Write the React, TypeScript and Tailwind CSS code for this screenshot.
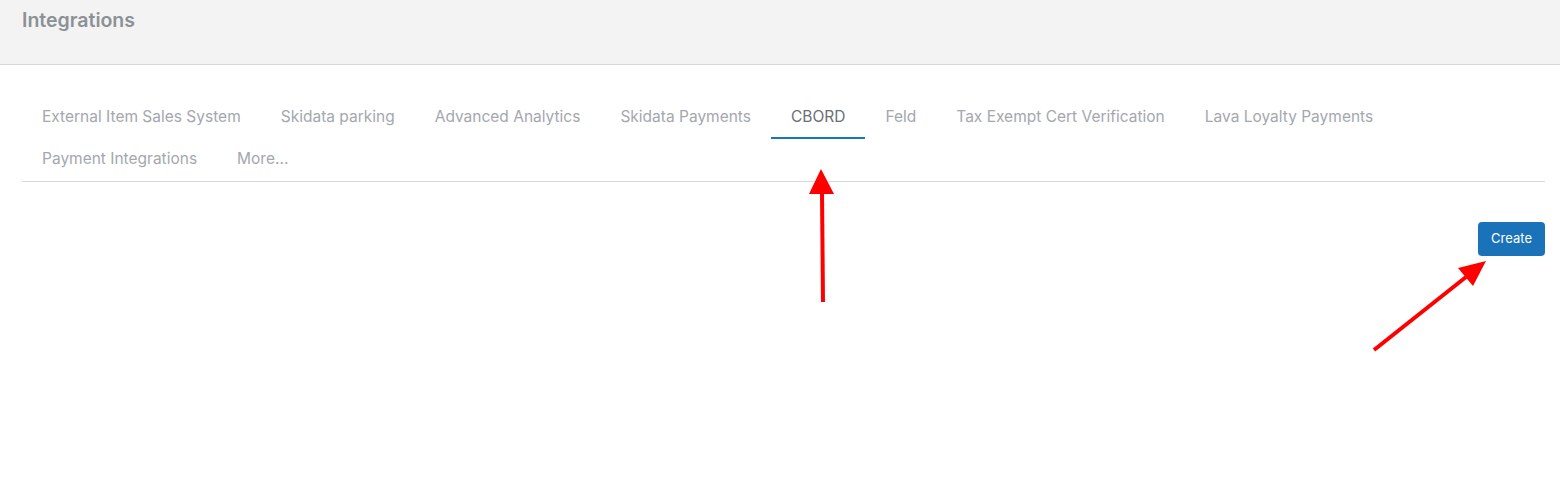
import React from 'react';

const tabs = [
  'External Item Sales System',
  'Skidata parking',
  'Advanced Analytics',
  'Skidata Payments',
  'CBORD',
  'Feld',
  'Tax Exempt Cert Verification',
  'Lava Loyalty Payments',
  'Payment Integrations',
  'More...',
];

const ACTIVE = 'CBORD';

export default function App() {
  return (
    <div className="relative min-h-[479px] bg-white" style={{ fontFamily: 'Inter, "Noto Sans", sans-serif' }}>
      <div className="h-[65px] bg-[#f3f3f3] border-b border-[#d9d9d9] px-[22px] pt-[7px]">
        <h1 className="text-[19.5px] font-semibold text-[#8c9196] leading-[26px]">Integrations</h1>
      </div>

      <div className="ml-[22px] mr-[15px] mt-[32px]">
        <div className="flex flex-wrap border-b border-[#d9d9d9]">
          {tabs.map((t) => {
            const active = t === ACTIVE;
            return (
              <div
                key={t}
                className={`px-[20px] h-[42px] flex items-center text-[15.5px] cursor-pointer border-b-2 ${
                  active ? 'text-[#6b6e73] border-[#1a75bb]' : 'text-[#a4a7ae] border-transparent'
                }`}
              >
                {t}
              </div>
            );
          })}
        </div>

        <div className="flex justify-end mt-[40px]">
          <button className="h-[34px] px-[13px] rounded-[4px] bg-[#1a72b8] text-white text-[13px]">
            Create
          </button>
        </div>
      </div>

      {/* annotation arrows */}
      <svg className="absolute inset-0 pointer-events-none" width="1560" height="479">
        <line x1="823" y1="302" x2="822" y2="192" stroke="#ff0000" strokeWidth="4" />
        <polygon points="821,169 809,194 834,194" fill="#ff0000" />
        <line x1="1374" y1="350" x2="1466" y2="277" stroke="#ff0000" strokeWidth="4" />
        <polygon points="1486,261 1458,268 1473,286" fill="#ff0000" />
      </svg>
    </div>
  );
}
